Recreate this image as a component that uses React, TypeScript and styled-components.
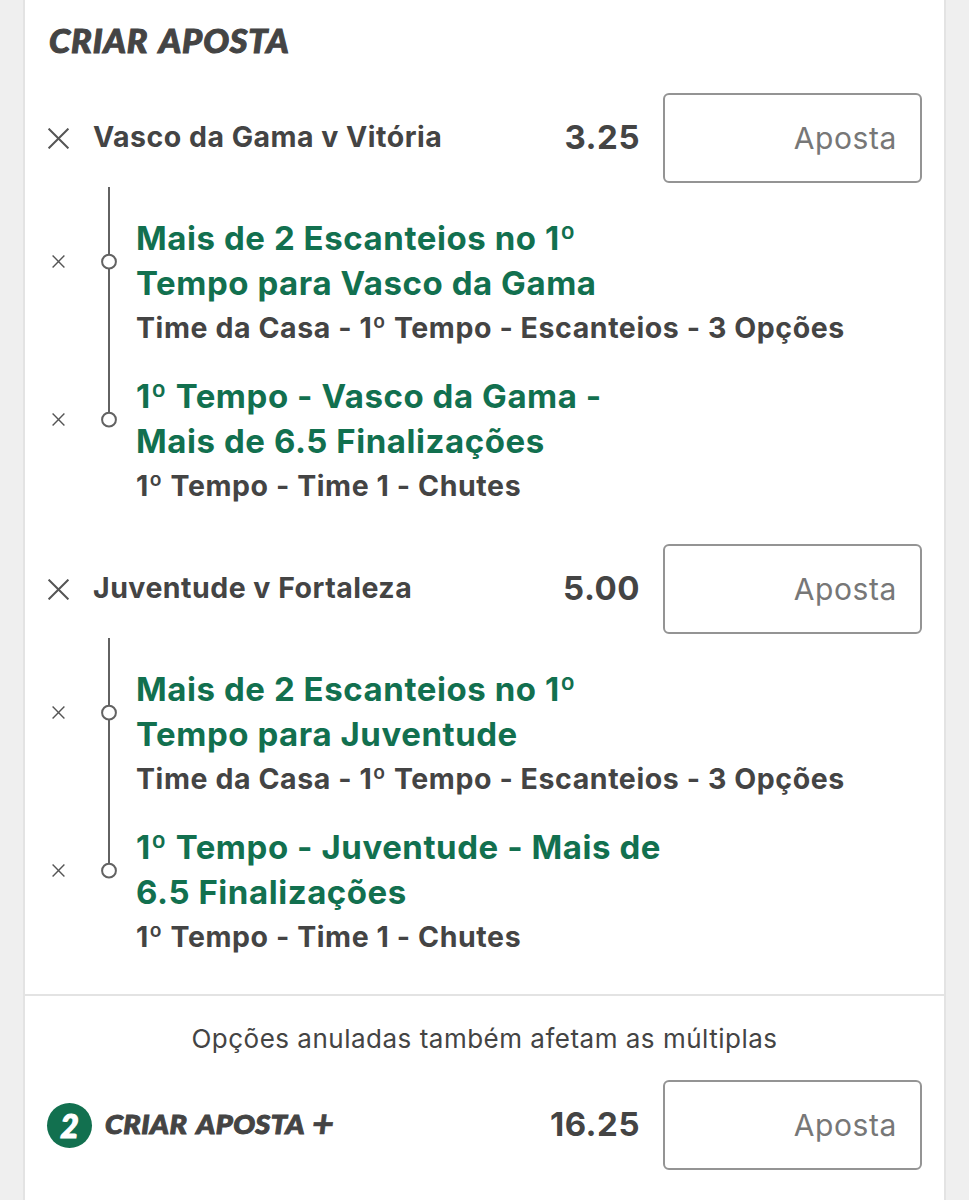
import React from 'react';
import styled, { createGlobalStyle } from 'styled-components';

const ink = '#444444';
const green = '#12704f';

const Global = createGlobalStyle`
  * { box-sizing: border-box; }
  body { margin: 0; background: #efefef; color: ${ink}; font-family: Inter, "Liberation Sans", sans-serif; }
`;
const Slip = styled.main`
  width: 923px;
  height: 1200px;
  margin-left: 23px;
  border: solid #e3e3e3;
  border-width: 0 2px;
  background: #fff;
  overflow: hidden;
`;
const Brand = styled.span<{ $size: number; $spacing: number }>`
  display: inline-block;
  font-family: Lato, sans-serif;
  font-style: italic;
  font-weight: 900;
  font-size: ${p => p.$size}px;
  letter-spacing: ${p => p.$spacing}px;
  word-spacing: 3px;
  -webkit-text-stroke: 1px currentColor;
  transform: scaleX(1.07);
  transform-origin: left;
  white-space: nowrap;
`;
const Title = styled.h1`
  margin: 0;
  height: 93px;
  padding: 21px 0 0 24px;
  font-size: 32px;
  line-height: 40px;
`;
const Group = styled.section`
  height: 451px;
`;
const Row = styled.div`
  display: flex;
  align-items: center;
  height: 90px;
  padding: 0 22px 0 23px;
`;
const CloseButton = styled.button`
  display: flex;
  flex: none;
  width: 21px;
  padding: 0;
  border: 0;
  background: none;
  justify-content: center;
`;
const Match = styled.div`
  flex: 1;
  margin-left: 24px;
  font-size: 28.5px;
  font-weight: 650;
  line-height: 40px;
  letter-spacing: 0.48px;
  white-space: nowrap;
  padding-bottom: 2px;
`;
const Odds = styled.div`
  margin-right: 23px;
  padding-bottom: 2px;
  font-size: 33px;
  font-weight: 650;
  line-height: 40px;
  letter-spacing: 0.5px;
`;
const Stake = styled.input`
  width: 259px;
  height: 90px;
  padding: 0 23px 0;
  border: 2px solid #949494;
  border-radius: 6px;
  background: #fff;
  font: 400 30px Inter, sans-serif;
  letter-spacing: 0.6px;
  text-align: right;
  &::placeholder { color: #777; opacity: 1; }
`;
const Legs = styled.div`
  display: flex;
  align-items: flex-start;
  padding: 4px 0 0 23px;
`;
const Remove = styled.div`
  width: 21px;
  padding-top: 67.5px;
  display: grid;
  align-items: start;
  grid-auto-rows: 158px;
`;
const Rail = styled.svg`
  flex: none;
  width: 18px;
  height: 242px;
  margin-left: 31px;
`;
const Selections = styled.div`
  margin: 29px 0 0 18px;
  display: grid;
  gap: 26px;
`;
const Pick = styled.div`
  color: ${green};
  font-size: 33px;
  font-weight: 700;
  line-height: 45px;
  letter-spacing: 0.56px;
  white-space: nowrap;
`;
const Market = styled.div`
  height: 42px;
  padding-top: 1px;
  font-size: 28.5px;
  font-weight: 650;
  line-height: 42px;
  letter-spacing: 0.58px;
  white-space: nowrap;
`;
const Footer = styled.footer`
  margin-top: -1px;
  border-top: 2px solid #e3e3e3;
`;
const Note = styled.p`
  margin: 0;
  padding-top: 23px;
  height: 84px;
  font-size: 26px;
  line-height: 40px;
  letter-spacing: 0.5px;
  text-align: center;
  white-space: nowrap;
`;
const FooterRow = styled(Row)`
  padding-left: 22px;
`;
const Count = styled.span`
  display: grid;
  place-items: center;
  width: 45px;
  height: 45px;
  border-radius: 50%;
  background: ${green};
  color: #fff;
  font: italic 900 32px/43px Lato, sans-serif;
  -webkit-text-stroke: 1.2px currentColor;
`;
const Bonus = styled.div`
  display: flex;
  flex: 1;
  align-items: center;
  margin-left: 13px;
  padding-bottom: 3px;
`;
const Plus = styled.span`
  margin: -4px 0 0 20px;
  font: italic 900 38px/40px Lato, sans-serif;
  -webkit-text-stroke: 0.6px currentColor;
`;

const Cross = ({ size, stroke }: { size: number; stroke: number }) => (
  <svg width={size} height={size} viewBox={`0 0 ${size} ${size}`}>
    <path d={`M.6 .6L${size - .6} ${size - .6}M${size - .6} .6L.6 ${size - .6}`} fill="none" stroke="#555" strokeWidth={stroke} />
  </svg>
);

interface Selection { pick: string[]; market: string }
interface Bet { match: string; odds: string; selections: Selection[] }

const bets: Bet[] = [
  {
    match: 'Vasco da Gama v Vitória', odds: '3.25',
    selections: [
      { pick: ['Mais de 2 Escanteios no 1º', 'Tempo para Vasco da Gama'], market: 'Time da Casa - 1º Tempo - Escanteios - 3 Opções' },
      { pick: ['1º Tempo - Vasco da Gama -', 'Mais de 6.5 Finalizações'], market: '1º Tempo - Time 1 - Chutes' },
    ],
  },
  {
    match: 'Juventude v Fortaleza', odds: '5.00',
    selections: [
      { pick: ['Mais de 2 Escanteios no 1º', 'Tempo para Juventude'], market: 'Time da Casa - 1º Tempo - Escanteios - 3 Opções' },
      { pick: ['1º Tempo - Juventude - Mais de', '6.5 Finalizações'], market: '1º Tempo - Time 1 - Chutes' },
    ],
  },
];

export default function App() {
  return (
    <>
      <Global />
      <Slip>
        <Title><Brand $size={32} $spacing={0.8}>CRIAR APOSTA</Brand></Title>
        {bets.map(bet => (
          <Group key={bet.match}>
            <Row>
              <CloseButton aria-label="Remover"><Cross size={21} stroke={2} /></CloseButton>
              <Match>{bet.match}</Match>
              <Odds>{bet.odds}</Odds>
              <Stake placeholder="Aposta" />
            </Row>
            <Legs>
              <Remove>
                {bet.selections.map(s => (
                  <CloseButton key={s.market} aria-label="Remover"><Cross size={13} stroke={1.4} /></CloseButton>
                ))}
              </Remove>
              <Rail viewBox="0 0 18 242" fill="none" stroke="#626262" strokeWidth="2">
                <path d="M9 0V67.5M9 81.5V225.5" />
                <circle cx="9" cy="74.7" r="6.9" />
                <circle cx="9" cy="232.7" r="6.9" />
              </Rail>
              <Selections>
                {bet.selections.map(s => (
                  <div key={s.market}>
                    {s.pick.map(line => <Pick key={line}>{line}</Pick>)}
                    <Market>{s.market}</Market>
                  </div>
                ))}
              </Selections>
            </Legs>
          </Group>
        ))}
        <Footer>
          <Note>Opções anuladas também afetam as múltiplas</Note>
          <FooterRow>
            <Count>2</Count>
            <Bonus><Brand $size={27} $spacing={0.4}>CRIAR APOSTA</Brand><Plus>+</Plus></Bonus>
            <Odds>16.25</Odds>
            <Stake placeholder="Aposta" />
          </FooterRow>
        </Footer>
      </Slip>
    </>
  );
}
